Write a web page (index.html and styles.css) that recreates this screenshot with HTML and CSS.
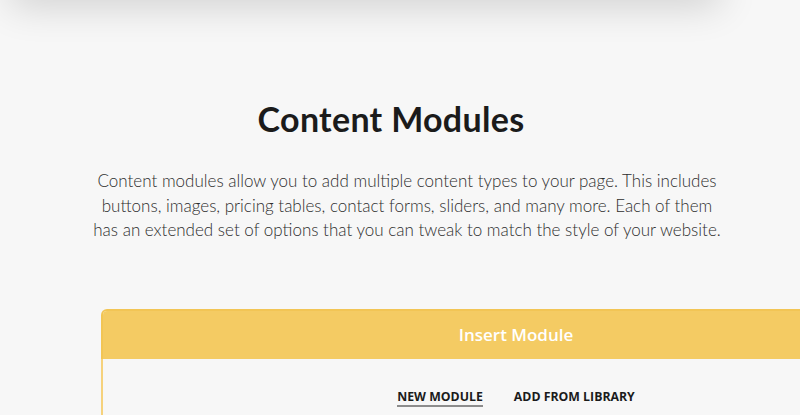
FILE: index.html
```html
<!DOCTYPE html>
<html lang="en">

<head>
  <meta charset="UTF-8" />
  <meta name="viewport" content="width=device-width, initial-scale=1.0" />
  <title>Content Modules</title>
  <link rel="stylesheet" href="styles.css">
</head>

<body>
  <div class="top-card"></div>

  <section class="intro">
    <h2>Content Modules</h2>
    <p>Content modules allow you to add multiple content types to your page. This includes buttons, images, pricing tables, contact forms, sliders, and many more. Each of them has an extended set of options that you can tweak to match the style of your website.</p>
  </section>

  <div class="module-panel">
    <div class="panel-header">Insert Module</div>
    <div class="panel-body">
      <nav class="panel-tabs">
        <a href="#" class="tab active">New Module</a>
        <a href="#" class="tab">Add From Library</a>
      </nav>
    </div>
  </div>
</body>

</html>
```

FILE: styles.css
```css
:root {
  --bg-color: #f7f7f7;
  --text-color: #1b1b1b;
  --body-text: #2e2e2e;
  --accent: #f4cb63;
  --accent-border: #f2c555;
}

* {
  box-sizing: border-box;
}

html,
body {
  margin: 0;
  padding: 0;
  width: 100%;
  height: 100%;
  background-color: var(--bg-color);
  overflow: hidden;
}

.top-card {
  width: 710px;
  height: 40px;
  margin: -40px 0 0 10px;
  background: var(--bg-color);
  box-shadow: 0 6px 38px rgba(0, 0, 0, 0.16);
}

.intro {
  text-align: center;
  padding-top: 98px;
}

.intro h2 {
  margin: 0 0 0 -18px;
  font-family: 'Lato', sans-serif;
  font-weight: 700;
  font-size: 34px;
  letter-spacing: 0.3px;
  color: var(--text-color);
}

.intro p {
  width: 634px;
  margin: 30px 0 0 calc(50% - 310px);
  font-family: 'Lato', sans-serif;
  font-weight: 300;
  font-size: 17px;
  line-height: 24.5px;
  color: var(--body-text);
}

.module-panel {
  width: 830px;
  margin: 66px 0 0 101px;
  border: 2px solid var(--accent-border);
  border-bottom: none;
  border-radius: 6px 6px 0 0;
}

.panel-header {
  background: var(--accent);
  height: 48px;
  display: flex;
  align-items: center;
  justify-content: center;
  font-family: 'Open Sans', sans-serif;
  font-weight: 600;
  font-size: 17px;
  color: #fff;
  border-radius: 4px 4px 0 0;
}

.panel-body {
  border-left: 2px solid #f6d27c;
  margin-left: -2px;
  height: 60px;
}

.panel-tabs {
  display: flex;
  justify-content: center;
  gap: 31px;
  padding-top: 29px;
}

.tab {
  font-family: 'Open Sans', sans-serif;
  font-weight: 700;
  font-size: 12.3px;
  text-transform: uppercase;
  color: #1b1b1b;
  text-decoration: none;
  border-bottom: 2px solid transparent;
}

.tab.active {
  border-bottom-color: #8c8c8c;
}
```
